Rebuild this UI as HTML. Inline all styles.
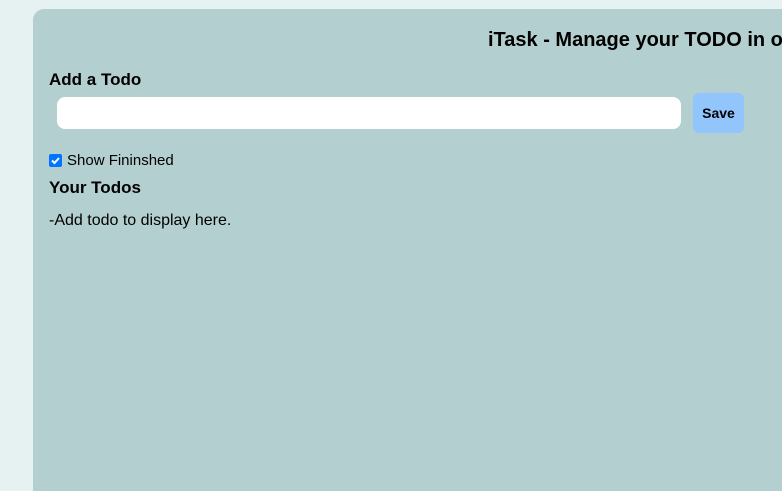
<!DOCTYPE html>
<html><head><meta charset="utf-8"><style>
*{margin:0;padding:0;box-sizing:border-box}
html,body{width:782px;height:491px;overflow:hidden}
body{background:#e6f2f1;font-family:"Liberation Sans",sans-serif;color:#000;position:relative}
.panel{position:absolute;left:33px;top:9px;width:749px;height:482px;background:#b4cfcf;border-radius:11px 0 0 0;overflow:hidden}
.abs{position:absolute;white-space:nowrap}
h1{font-size:20px;font-weight:bold;left:455px;top:20px}
h2{font-size:17px;font-weight:bold}
.inp{left:24px;top:88px;width:624px;height:32px;background:#fff;border-radius:8px}
.btn{left:660px;top:84px;width:51px;height:40px;background:#93c5fd;border-radius:6px;font-weight:bold;font-size:14px;text-align:center;line-height:40px}
.cb{left:16px;top:144px;width:13px;height:13px;background:#0075ff;border-radius:2px}
</style></head><body>
<div class="panel">
<h1 class="abs">iTask - Manage your TODO in one place</h1>
<h2 class="abs" style="left:16px;top:61px">Add a Todo</h2>
<div class="abs inp"></div>
<div class="abs btn">Save</div>
<div class="abs cb" style="top:145px"><svg width="13" height="13" viewBox="0 0 13 13"><path d="M3 6.5l2.5 2.5 4.5-5" stroke="#fff" stroke-width="2" fill="none"/></svg></div>
<div class="abs" style="left:34px;top:143px;font-size:15px">Show Fininshed</div>
<h2 class="abs" style="left:16px;top:169px">Your Todos</h2>
<div class="abs" style="left:16px;top:203px;font-size:16px">-Add todo to display here.</div>
</div>
</body></html>
